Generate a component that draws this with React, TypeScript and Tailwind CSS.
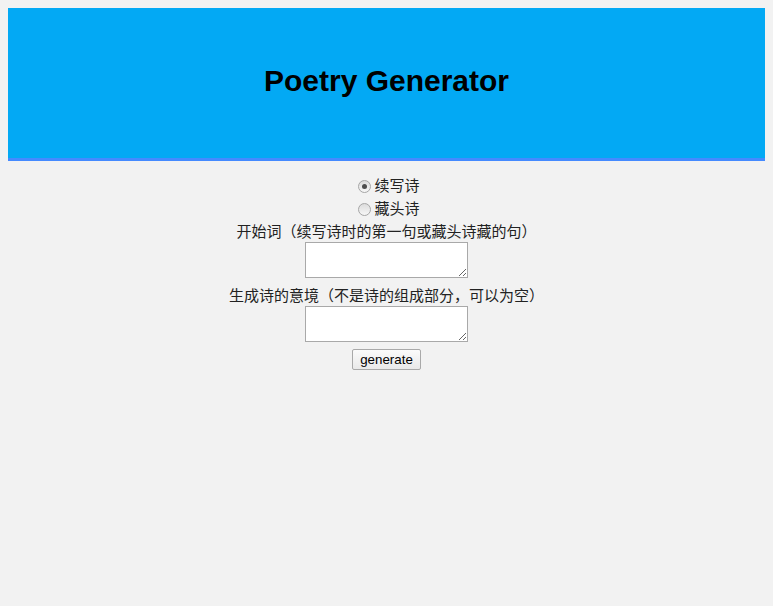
import { useState } from "react";

const font = { fontFamily: "'Liberation Sans', 'Noto Sans CJK SC', sans-serif" };

function Radio({ checked, label, onPick }: { checked: boolean; label: string; onPick: () => void }) {
  return (
    <label className="flex h-[23px] items-center justify-center pt-[2px] cursor-pointer" onClick={onPick}>
      <span className="ml-[5px] mr-[3px] flex h-[13px] w-[13px] items-center justify-center rounded-full border border-[#a6a6a6] bg-gradient-to-b from-[#dcdcdc] to-[#f7f7f7]">
        {checked && <span className="h-[5px] w-[5px] rounded-full bg-[#4d4d4d]" />}
      </span>
      <span>{label}</span>
    </label>
  );
}

export default function App() {
  const [mode, setMode] = useState<"continue" | "acrostic">("continue");

  return (
    <div className="min-h-[606px] bg-[#f2f2f2] p-2 text-[15px] text-[#222]" style={font}>
      {/* Header */}
      <header className="flex h-[153px] items-center justify-center border-b-[3px] border-[#448aff] bg-[#03a9f4]">
        <h1 className="mb-[6px] text-[30px] font-bold text-black">Poetry Generator</h1>
      </header>

      {/* Form */}
      <div className="mt-[13px] flex flex-col items-center">
        <Radio checked={mode === "continue"} label="续写诗" onPick={() => setMode("continue")} />
        <Radio checked={mode === "acrostic"} label="藏头诗" onPick={() => setMode("acrostic")} />
        <p className="h-[22px] leading-[24px]">开始词（续写诗时的第一句或藏头诗藏的句）</p>
        <textarea className="h-[36px] w-[163px] resize border border-[#a9a9a9] bg-white text-[13px]" />
        <p className="mt-[6px] h-[22px] leading-[24px]">生成诗的意境（不是诗的组成部分，可以为空）</p>
        <textarea className="h-[36px] w-[163px] resize border border-[#a9a9a9] bg-white text-[13px]" />
        <button
          className="mt-[7px] h-[21px] rounded-[2px] border border-[#a9a9a9] bg-gradient-to-b from-[#fbfbfb] to-[#e9e9e9] px-[7px] text-[13.33px] leading-[19px] text-black"
          style={{ fontFamily: "'Liberation Sans', sans-serif" }}
        >
          generate
        </button>
      </div>
    </div>
  );
}
